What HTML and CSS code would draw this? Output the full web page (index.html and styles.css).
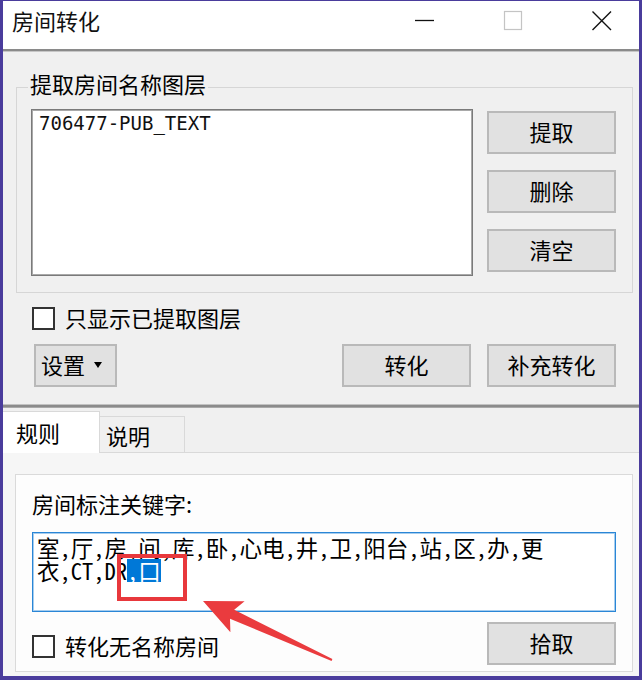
FILE: index.html
```html
<!DOCTYPE html>
<html lang="zh-CN">
<head>
<meta charset="utf-8">
<title>房间转化</title>
<link rel="stylesheet" href="styles.css">
</head>
<body>
<div class="window">
  <div class="titlebar">
    <div class="title">房间转化</div>
    <div class="controls">
      <span class="ctl ctl-min"><svg width="20" height="24" viewBox="0 0 20 24"><path d="M0 11.5H19" stroke="#111" stroke-width="1.3"/></svg></span>
      <span class="ctl ctl-max"><svg width="20" height="24" viewBox="0 0 20 24"><rect x="1.5" y="2.5" width="17" height="18" fill="none" stroke="#c4c4c4" stroke-width="1.2"/></svg></span>
      <span class="ctl ctl-close"><svg width="22" height="24" viewBox="0 0 22 24"><path d="M1.5 2.5L20 21M20 2.5L1.5 21" stroke="#111" stroke-width="1.4"/></svg></span>
    </div>
  </div>

  <div class="content">
    <fieldset class="group">
      <legend class="group-label">提取房间名称图层</legend>
      <div class="group-body">
        <div class="listbox"><div class="list-item">706477-PUB_TEXT</div></div>
        <div class="side-buttons">
          <button class="btn btn-wide">提取</button>
          <button class="btn btn-wide">删除</button>
          <button class="btn btn-wide">清空</button>
        </div>
      </div>
    </fieldset>

    <label class="check-row check-top"><span class="checkbox"></span><span class="check-text">只显示已提取图层</span></label>

    <div class="action-row">
      <button class="btn btn-settings">设置<span class="caret"></span></button>
      <div class="action-right">
        <button class="btn btn-wide">转化</button>
        <button class="btn btn-wide">补充转化</button>
      </div>
    </div>
  </div>

  <div class="splitter"></div>

  <div class="tabs">
    <div class="tab-strip">
      <div class="tab tab-active">规则</div>
      <div class="tab tab-idle">说明</div>
    </div>
    <div class="tab-page">
      <div class="panel">
        <div class="panel-label">房间标注关键字:</div>
        <div class="keywords">室,厅,房,间,库,卧,心电,井,卫,阳台,站,区,办,更<br>衣,CT,DR<span class="sel">,口</span></div>
        <div class="panel-row">
          <label class="check-row check-bottom"><span class="checkbox"></span><span class="check-text">转化无名称房间</span></label>
          <button class="btn btn-wide">拾取</button>
        </div>
      </div>
    </div>
  </div>

  <svg class="annotation" width="642" height="680" viewBox="0 0 642 680">
    <rect x="119" y="556" width="66" height="43" fill="none" stroke="#e8383c" stroke-width="4"/>
    <polygon points="203,601 244.6,601.3 234.2,609.8 332.4,659.1 331.6,660.9 230,618.8 230.4,632.3" fill="#ea3b3e"/>
  </svg>
</div>
</body>
</html>
```

FILE: styles.css
```css
* {
  box-sizing: border-box;
}

html,
body {
  margin: 0;
  padding: 0;
}

body {
  width: 642px;
  height: 680px;
  overflow: hidden;
  background: #4a3c9c;
  font-family: "Noto Sans CJK SC", "Noto Sans", sans-serif;
  font-size: 22px;
  color: #000;
}

.window {
  position: relative;
  width: 642px;
  height: 680px;
  border-style: solid;
  border-color: #4a3c9c;
  border-width: 1px 3px 4px 3px;
  background: #f0f0f0;
  display: flex;
  flex-direction: column;
}

/* ---------- title bar ---------- */
.titlebar {
  flex: none;
  height: 50px;
  background: #fff;
  border-bottom: 2px solid #8a8a8a;
  box-shadow: 0 1px 0 #c6c6c6;
  display: flex;
  align-items: flex-start;
  justify-content: space-between;
  padding: 7px 0 0 9px;
}

.title {
  font-size: 22px;
  line-height: 24px;
  color: #111;
}

.controls {
  display: flex;
  height: 24px;
  margin-top: 1px;
}

.ctl {
  display: flex;
  justify-content: center;
  width: 88px;
}

.ctl-close {
  width: 82px;
  padding-left: 8px;
}

/* ---------- upper content ---------- */
.content {
  flex: none;
  display: flex;
  flex-direction: column;
  padding: 0 6px 0 13px;
}

.group {
  margin: 21px 0 0;
  padding: 0;
  min-width: 0;
  border: 1px solid #d6d6d6;
}

.group-label {
  margin-left: 11px;
  padding: 0 2px 8px;
  font-size: 22px;
  line-height: 22px;
}

.group-body {
  display: flex;
  justify-content: space-between;
  padding: 7px 16px 16px 14px;
}

.listbox {
  width: 442px;
  height: 167px;
  background: #fff;
  border: 1px solid #7a7a7a;
  box-shadow: inset 0 0 0 1px #a9a9a9;
  padding: 2px 6px;
}

.list-item {
  padding-left: 1px;
  font-family: "DejaVu Sans Mono", "Liberation Mono", monospace;
  font-size: 19px;
  line-height: 22px;
  color: #111;
}

.side-buttons {
  display: flex;
  flex-direction: column;
  gap: 16px;
  padding-top: 2px;
}

.btn {
  height: 43px;
  margin: 0;
  padding: 0 0 3px;
  border: 2px solid #b9b9b9;
  background: #e1e1e1;
  font-family: "Noto Sans CJK SC", sans-serif;
  font-size: 22px;
  line-height: 24px;
  color: #000;
  display: flex;
  align-items: center;
  justify-content: center;
}

.btn-wide {
  width: 129px;
}

.check-row {
  display: flex;
  align-items: center;
  gap: 10px;
  height: 23px;
}

.check-top {
  margin: 14px 0 0 16px;
}

.checkbox {
  flex: none;
  width: 23px;
  height: 23px;
  background: #fff;
  border: 2px solid #333;
}

.check-text {
  font-size: 22px;
  line-height: 24px;
  padding-bottom: 4px;
}

.action-row {
  display: flex;
  justify-content: space-between;
  margin-top: 14px;
  padding: 0 17px 0 18px;
}

.btn-settings {
  width: 83px;
  justify-content: flex-start;
  padding-left: 5px;
}

.caret {
  width: 0;
  height: 0;
  margin: 2px 0 0 9px;
  border-left: 4px solid transparent;
  border-right: 4px solid transparent;
  border-top: 6px solid #000;
}

.action-right {
  display: flex;
  gap: 16px;
}

.splitter {
  flex: none;
  height: 4px;
  margin-top: 17px;
  background: #8b8b8b;
  border-top: 1px solid #c2c2c2;
  border-bottom: 1px solid #a9a9a9;
}

/* ---------- tabs ---------- */
.tabs {
  flex: 1;
  display: flex;
  flex-direction: column;
}

.tab-strip {
  flex: none;
  height: 45px;
  display: flex;
  align-items: flex-end;
  border-bottom: 1px solid #d9d9d9;
}

.tab {
  display: flex;
  align-items: center;
  font-size: 22px;
  line-height: 24px;
  border: 1px solid #d9d9d9;
  border-bottom: none;
}

.tab-active {
  width: 97px;
  height: 42px;
  margin-bottom: -1px;
  padding: 0 0 2px 13px;
  background: #fff;
  border-left: none;
  position: relative;
}

.tab-idle {
  width: 85px;
  height: 36px;
  padding-left: 6px;
  background: #f0f0f0;
  border-left: none;
}

.tab-page {
  flex: 1;
  display: flex;
  flex-direction: column;
  background: #f6f6f6;
  padding: 21px 6px 4px 12px;
}

.panel {
  flex: 1;
  display: flex;
  flex-direction: column;
  background: #fdfdfd;
  border: 1px solid #dadada;
  padding: 0 16px;
}

.panel-label {
  margin-top: 16px;
  font-size: 22px;
  line-height: 24px;
}

.keywords {
  margin-top: 17px;
  height: 80px;
  background: #fff;
  border: 1px solid #2a86d6;
  box-shadow: inset 0 0 0 1px #a6cdee;
  padding: 3px 4px 0;
  font-family: "Noto Sans CJK SC", sans-serif;
  font-feature-settings: "hwid" 1;
  font-size: 22.5px;
  line-height: 23px;
  color: #000;
}

.sel {
  display: inline-block;
  line-height: 23px;
  background: #0078d7;
  color: #fff;
}

.panel-row {
  display: flex;
  justify-content: space-between;
  align-items: flex-start;
  margin-top: 10px;
}

.check-bottom {
  margin-top: 13px;
}

/* ---------- annotation overlay ---------- */
.annotation {
  position: absolute;
  left: -3px;
  top: -1px;
  pointer-events: none;
}
```
